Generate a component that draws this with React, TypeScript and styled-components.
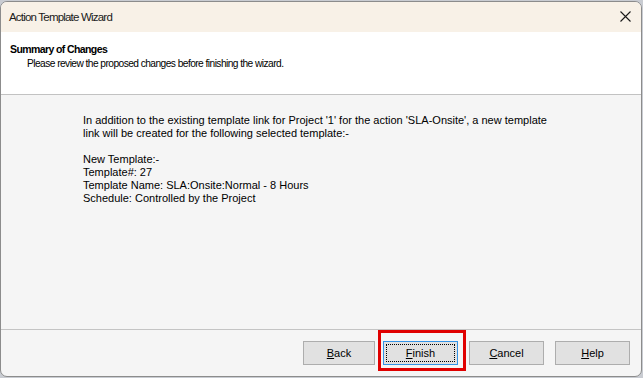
import * as React from 'react';
import styled, { createGlobalStyle } from 'styled-components';

const GlobalStyle = createGlobalStyle`
  *, *::before, *::after {
    box-sizing: border-box;
  }
  html, body {
    margin: 0;
    padding: 0;
    background: #c9ccd2;
    overflow: hidden;
  }
`;

const sansFont = `"Liberation Sans", Arial, sans-serif`;

const Window = styled.div`
  margin-top: 1px;
  width: 642px;
  height: 376px;
  border: 1px solid #8c8c8c;
  border-radius: 7px;
  overflow: hidden;
  display: flex;
  flex-direction: column;
  background: #f5f5f5;
  font-family: ${sansFont};
  color: #000;
`;

const TitleBar = styled.div`
  height: 30px;
  flex: none;
  background: #f8f1e7;
  display: flex;
  align-items: center;
  justify-content: space-between;
  padding: 0 0 1px 8px;
  font-size: 11.5px;
  letter-spacing: -0.8px;
  color: #1a1a1a;
`;

const CloseButton = styled.div`
  width: 32px;
  height: 30px;
  display: flex;
  align-items: center;
  justify-content: center;
`;

const Header = styled.div`
  height: 63px;
  flex: none;
  background: #ffffff;
  border-bottom: 1px solid #c2c2c2;
  padding: 10px 9px 0;
`;

const HeaderTitle = styled.div`
  font-weight: bold;
  font-size: 10.5px;
  letter-spacing: -0.6px;
  line-height: 15px;
`;

const HeaderSubtitle = styled.div`
  padding-left: 17px;
  font-size: 10.2px;
  letter-spacing: -0.55px;
  line-height: 14px;
`;

const Body = styled.div`
  flex: 1;
  padding: 19px 0 0 82px;
  font-size: 11px;
  border-bottom: 1px solid #c4c4c4;
`;

const Para = styled.p<{ gap?: boolean }>`
  margin: 0 0 ${props => (props.gap ? '13px' : '0')};
  line-height: 13px;
  width: 475px;
`;

const Footer = styled.div`
  height: 46px;
  flex: none;
  display: flex;
  align-items: center;
  justify-content: flex-end;
  gap: 11px;
  padding-right: 11px;
`;

const Highlight = styled.div`
  position: relative;
  display: flex;
  margin-left: -3px;
  &::before {
    content: '';
    position: absolute;
    top: -11px;
    left: -5px;
    right: -8px;
    bottom: -6px;
    border: 3px solid #e00000;
    pointer-events: none;
  }
`;

const Button = styled.button<{ focused?: boolean; narrow?: boolean }>`
  width: ${props => (props.narrow ? '72px' : '75px')};
  height: 24px;
  border: 1px solid ${props => (props.focused ? '#3393e6' : '#adadad')};
  background: #e1e1e1;
  font-family: ${sansFont};
  font-size: 11px;
  color: #000;
  padding: 2px;
  display: flex;
`;

const ButtonInner = styled.span<{ focused?: boolean }>`
  flex: 1;
  display: flex;
  align-items: center;
  justify-content: center;
  border: 1px dotted ${props => (props.focused ? '#000' : 'transparent')};
  u {
    text-decoration: underline;
    text-underline-offset: 1px;
  }
`;

interface BtnProps {
  label: string;
  focused?: boolean;
  narrow?: boolean;
}

const DialogButton = ({ label, focused, narrow }: BtnProps) => (
  <Button focused={focused} narrow={narrow}>
    <ButtonInner focused={focused}>
      <u>{label[0]}</u>
      {label.slice(1)}
    </ButtonInner>
  </Button>
);

export default function App() {
  return (
    <>
      <GlobalStyle />
      <Window>
        <TitleBar>
          <span>Action Template Wizard</span>
          <CloseButton>
            <svg width="11" height="11" viewBox="0 0 11 11">
              <path d="M0.5 0.5 L10.5 10.5 M10.5 0.5 L0.5 10.5" stroke="#1a1a1a" strokeWidth="1.1" />
            </svg>
          </CloseButton>
        </TitleBar>
        <Header>
          <HeaderTitle>Summary of Changes</HeaderTitle>
          <HeaderSubtitle>Please review the proposed changes before finishing the wizard.</HeaderSubtitle>
        </Header>
        <Body>
          <Para gap>
            In addition to the existing template link for Project '1' for the action 'SLA-Onsite', a new template
            link will be created for the following selected template:-
          </Para>
          <Para>New Template:-</Para>
          <Para>Template#: 27</Para>
          <Para>Template Name: SLA:Onsite:Normal - 8 Hours</Para>
          <Para>Schedule: Controlled by the Project</Para>
        </Body>
        <Footer>
          <DialogButton label="Back" narrow />
          <Highlight>
            <DialogButton label="Finish" focused />
          </Highlight>
          <DialogButton label="Cancel" />
          <DialogButton label="Help" />
        </Footer>
      </Window>
    </>
  );
}
